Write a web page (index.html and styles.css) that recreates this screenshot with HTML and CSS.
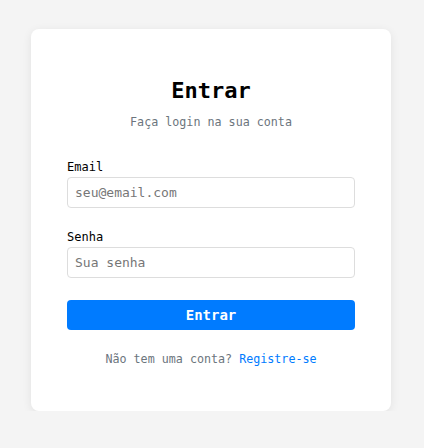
FILE: index.html
```html
<!DOCTYPE html>
<html lang="pt-BR">
<head>
<meta charset="utf-8">
<title>Entrar</title>
<link rel="stylesheet" href="styles.css">
</head>
<body>
<main class="page">
  <section class="card">
    <h1 class="title">Entrar</h1>
    <p class="subtitle">Faça login na sua conta</p>
    <form class="form">
      <div class="field">
        <label class="label" for="email">Email</label>
        <input class="input" id="email" type="email" placeholder="seu@email.com">
      </div>
      <div class="field">
        <label class="label" for="senha">Senha</label>
        <input class="input" id="senha" type="password" placeholder="Sua senha">
      </div>
      <button class="button" type="button">Entrar</button>
    </form>
    <p class="footer">Não tem uma conta? <a class="link" href="#">Registre-se</a></p>
  </section>
</main>
</body>
</html>
```

FILE: styles.css
```css
* { box-sizing: border-box; }
html, body { margin: 0; padding: 0; }
body {
  background: #f4f4f4;
  font-family: "DejaVu Sans Mono", monospace;
  color: #000;
}
.page {
  display: flex;
  justify-content: center;
  padding-top: 29px;
  padding-left: 31px;
  padding-right: 33px;
}
.card {
  width: 360px;
  background: #fff;
  border-radius: 8px;
  box-shadow: 0 2px 10px rgba(0,0,0,0.08);
  padding: 49px 36px 45px;
}
.title {
  margin: 0;
  text-align: center;
  font-size: 22px;
  line-height: 26px;
  font-weight: bold;
}
.subtitle {
  margin: 11px 0 0;
  text-align: center;
  font-size: 11.7px;
  line-height: 14px;
  color: #6c757d;
}
.form {
  margin-top: 31px;
  display: flex;
  flex-direction: column;
}
.field {
  display: flex;
  flex-direction: column;
  margin-bottom: 22px;
}
.label {
  font-size: 12px;
  line-height: 14px;
  margin-bottom: 3px;
  color: #000;
}
.input {
  height: 31px;
  padding: 0 7px;
  border: 1px solid #ddd;
  border-radius: 4px;
  font-family: "DejaVu Sans Mono", monospace;
  font-size: 13px;
  color: #333;
}
.input::placeholder { color: #777; }
.button {
  height: 30px;
  border: 0;
  border-radius: 4px;
  background: #007bff;
  color: #fff;
  font-family: "DejaVu Sans Mono", monospace;
  font-size: 14px;
  font-weight: bold;
}
.footer {
  margin: 22px 0 0;
  text-align: center;
  font-size: 11.7px;
  line-height: 14px;
  color: #6c757d;
}
.link {
  color: #007bff;
  text-decoration: none;
}
```
